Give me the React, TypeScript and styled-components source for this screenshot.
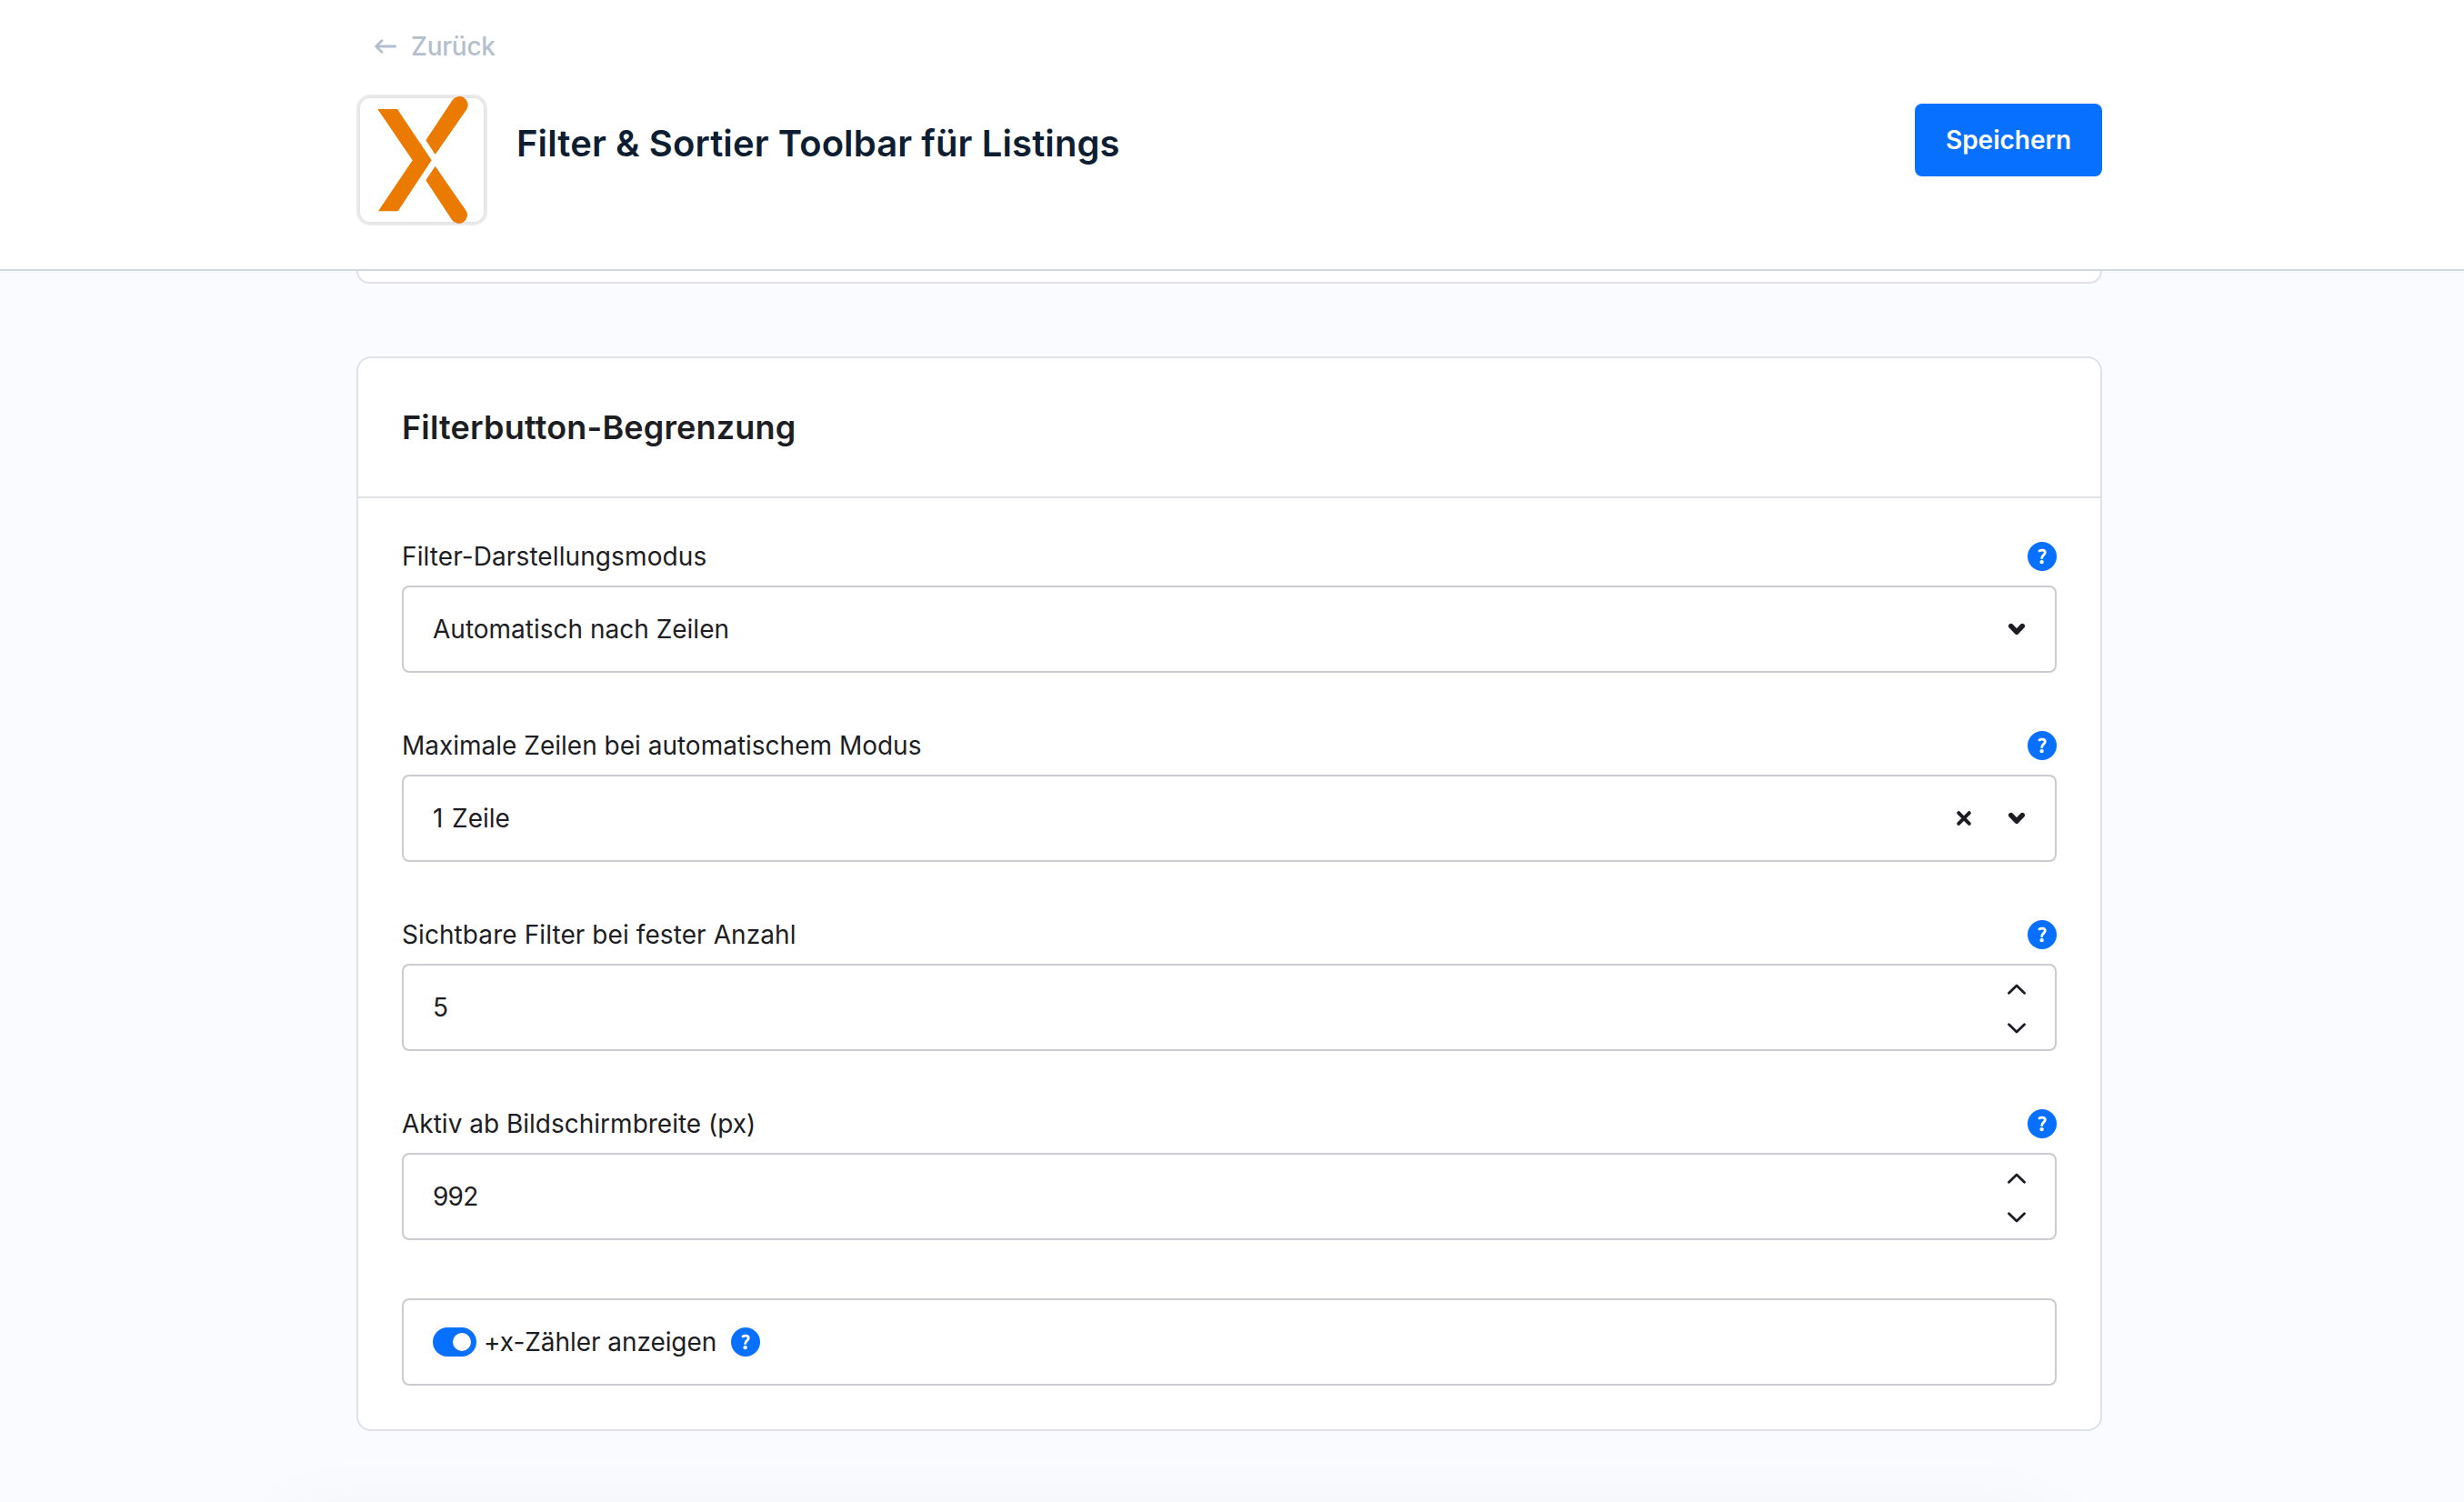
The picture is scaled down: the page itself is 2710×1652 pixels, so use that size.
import React from "react";
import styled, { createGlobalStyle } from "styled-components";

const Global = createGlobalStyle`
  *, *::before, *::after { box-sizing: border-box; }
  body { margin: 0; background: #fafbff; font-family: Inter, "Liberation Sans", sans-serif; font-size: 28px; color: #1d1d24; -webkit-font-smoothing: antialiased; }
`;

const Page = styled.div`
  height: 1652px;
  overflow: hidden;
  position: relative;
  display: flex;
  flex-direction: column;
`;

const Header = styled.header`
  flex: none;
  height: 298px;
  background: #fff;
  border-bottom: 2px solid #d1d9e0;
`;

const HeaderInner = styled.div`
  width: 1920px;
  margin-left: 392px;
`;

const BackLink = styled.a`
  display: flex;
  align-items: center;
  gap: 16px;
  height: 104px;
  padding: 0 0 2px 20px;
  color: #b3bfcd;
  font-weight: 500;
  letter-spacing: -0.25px;
`;

const HeaderRow = styled.div`
  display: flex;
  align-items: flex-start;
`;

const LogoFrame = styled.div`
  width: 144px;
  height: 144px;
  border-radius: 15px;
  border: 2px solid #ebebeb;
  box-shadow: inset 0 0 0 2px #e5e5e5;
  svg { display: block; margin: -2px; }
`;

const Title = styled.h1`
  flex: 1;
  margin: 30px 0 0 32px;
  font-size: 40px;
  line-height: 48px;
  font-weight: 600;
  letter-spacing: 0.1px;
  color: #0d1e33;
`;

const SaveButton = styled.button`
  width: 206px;
  height: 80px;
  margin-top: 10px;
  padding: 0;
  border: 0;
  border-radius: 8px;
  background: #0870ff;
  color: #fff;
  font: inherit;
  font-weight: 600;
`;

const Content = styled.main`
  width: 1920px;
  margin-left: 392px;
`;

const PreviousCardEnd = styled.div`
  height: 14px;
  background: #fff;
  border: 2px solid #e0e1e7;
  border-top: 0;
  border-radius: 0 0 16px 16px;
  margin-bottom: 80px;
`;

const Card = styled.section`
  background: #fff;
  border: 2px solid #e0e1e7;
  border-radius: 16px;
`;

const CardHeader = styled.div`
  height: 154px;
  padding: 0 48px;
  display: flex;
  align-items: center;
  border-bottom: 2px solid #e0e1e7;
`;

const CardTitle = styled.h2`
  margin: 0;
  font-size: 36px;
  line-height: 44px;
  font-weight: 600;
  letter-spacing: 0.17px;
`;

const CardBody = styled.div`
  padding: 48px;
  display: grid;
  gap: 64px;
`;

const Field = styled.div`
  display: grid;
  gap: 16px;
`;

const LabelRow = styled.div`
  height: 32px;
  display: flex;
  align-items: center;
  justify-content: space-between;
`;

const Text = styled.span<{ $tracking?: number; $wordGap?: number }>`
  letter-spacing: ${(p) => p.$tracking ?? 0}px;
  word-spacing: ${(p) => p.$wordGap ?? 0}px;
`;

const Control = styled.div<{ $gap?: number }>`
  height: 96px;
  border: 2px solid #cccbd2;
  border-radius: 8px;
  padding: 0 32px;
  display: flex;
  align-items: center;
  gap: ${(p) => p.$gap ?? 0}px;
`;

const Value = styled(Text)`
  flex: 1;
`;

const Actions = styled.span`
  display: flex;
  align-items: center;
  gap: 38px;
`;

const Stepper = styled.span`
  display: grid;
  gap: 31px;
  padding-top: 3px;
`;

const HelpBadge = styled.span<{ $gap?: number }>`
  width: 32px;
  height: 32px;
  margin-left: ${(p) => p.$gap ?? 0}px;
  border-radius: 50%;
  background: #0870ff;
`;

const Switch = styled.span`
  width: 48px;
  height: 32px;
  border-radius: 16px;
  background: #0870ff;
  padding: 6px;
  display: flex;
  justify-content: flex-end;
`;

const Knob = styled.span`
  width: 20px;
  height: 20px;
  border-radius: 50%;
  background: #fff;
`;

const BottomShade = styled.div`
  position: absolute;
  left: 320px;
  right: 460px;
  top: 1700px;
  height: 40px;
  box-shadow: 0 0 100px 10px rgba(50, 50, 50, 0.07);
`;

const Help = ({ gap }: { gap?: number }) => (
  <HelpBadge $gap={gap}>
    <svg width="32" height="32" viewBox="0 0 32 32" fill="none">
      <path d="M13 9.9C14.8 8.6 19.3 8.6 19.3 11.8C19.3 14.4 15.8 14.5 15.7 17.7" stroke="#fff" strokeWidth="2.8" strokeLinecap="round" strokeLinejoin="round" />
      <circle cx="15.6" cy="22.1" r="2.2" fill="#fff" />
    </svg>
  </HelpBadge>
);

const SelectArrow = () => (
  <svg width="20" height="14" viewBox="0 0 20 14" fill="none" stroke="#1d1d24" strokeWidth="5.6" strokeLinecap="round" strokeLinejoin="round">
    <path d="M3.8 3.6L10 10.2L16.2 3.6" />
  </svg>
);

const Clear = () => (
  <svg width="20" height="20" viewBox="0 0 20 20" stroke="#1d1d24" strokeWidth="4" strokeLinecap="round">
    <path d="M4.2 4.2L15.8 15.8M15.8 4.2L4.2 15.8" />
  </svg>
);

const Chevron = ({ up }: { up?: boolean }) => (
  <svg width="20" height="12" viewBox="0 0 20 12" fill="none" stroke="#1d1d24" strokeWidth="2.8" strokeLinecap="round" strokeLinejoin="round">
    <path d={up ? "M1.5 10.3L10 1.9L18.5 10.3" : "M1.5 1.7L10 10.1L18.5 1.7"} />
  </svg>
);

const Logo = () => (
  <svg width="144" height="144" viewBox="36 252 432 432" fill="#eb7b00">
    <path d="M106 300H171L284 469L173 637H108L221 469Z" />
    <path d="M265 403L353 270A27.7 27.7 0 0 1 399 302L296 450Z" />
    <path d="M265 535L296 488L397 634A27.7 27.7 0 0 1 351 665Z" />
  </svg>
);

const fields = [
  { label: "Filter-Darstellungsmodus", value: "Automatisch nach Zeilen", type: "select", labelTracking: 0.1 },
  { label: "Maximale Zeilen bei automatischem Modus", value: "1 Zeile", type: "clearable", wordGap: 1.8 },
  { label: "Sichtbare Filter bei fester Anzahl", value: "5", type: "number", labelTracking: 0.08 },
  { label: "Aktiv ab Bildschirmbreite (px)", value: "992", type: "number", tracking: -0.8 },
];

export default function App() {
  return (
    <Page>
      <Global />
      <Header>
        <HeaderInner>
          <BackLink>
            <svg width="24" height="16" viewBox="0 0 24 16" fill="none" stroke="currentColor" strokeWidth="2.8" strokeLinecap="round" strokeLinejoin="round">
              <path d="M22.6 8H1.6M8 1.8L1.6 8L8 14.2" />
            </svg>
            Zurück
          </BackLink>
          <HeaderRow>
            <LogoFrame>
              <Logo />
            </LogoFrame>
            <Title>Filter &amp; Sortier Toolbar für Listings</Title>
            <SaveButton>Speichern</SaveButton>
          </HeaderRow>
        </HeaderInner>
      </Header>
      <BottomShade />
      <Content>
        <PreviousCardEnd />
        <Card>
          <CardHeader>
            <CardTitle>Filterbutton-Begrenzung</CardTitle>
          </CardHeader>
          <CardBody>
            {fields.map((f) => (
              <Field key={f.label}>
                <LabelRow>
                  <Text $tracking={f.labelTracking}>{f.label}</Text>
                  <Help />
                </LabelRow>
                <Control>
                  <Value $tracking={f.tracking} $wordGap={f.wordGap}>{f.value}</Value>
                  {f.type === "number" ? (
                    <Stepper>
                      <Chevron up />
                      <Chevron />
                    </Stepper>
                  ) : (
                    <Actions>
                      {f.type === "clearable" && <Clear />}
                      <SelectArrow />
                    </Actions>
                  )}
                </Control>
              </Field>
            ))}
            <Control $gap={8}>
              <Switch>
                <Knob />
              </Switch>
              <Text $tracking={-0.06}>+x-Zähler anzeigen</Text>
              <Help gap={8} />
            </Control>
          </CardBody>
        </Card>
      </Content>
    </Page>
  );
}
